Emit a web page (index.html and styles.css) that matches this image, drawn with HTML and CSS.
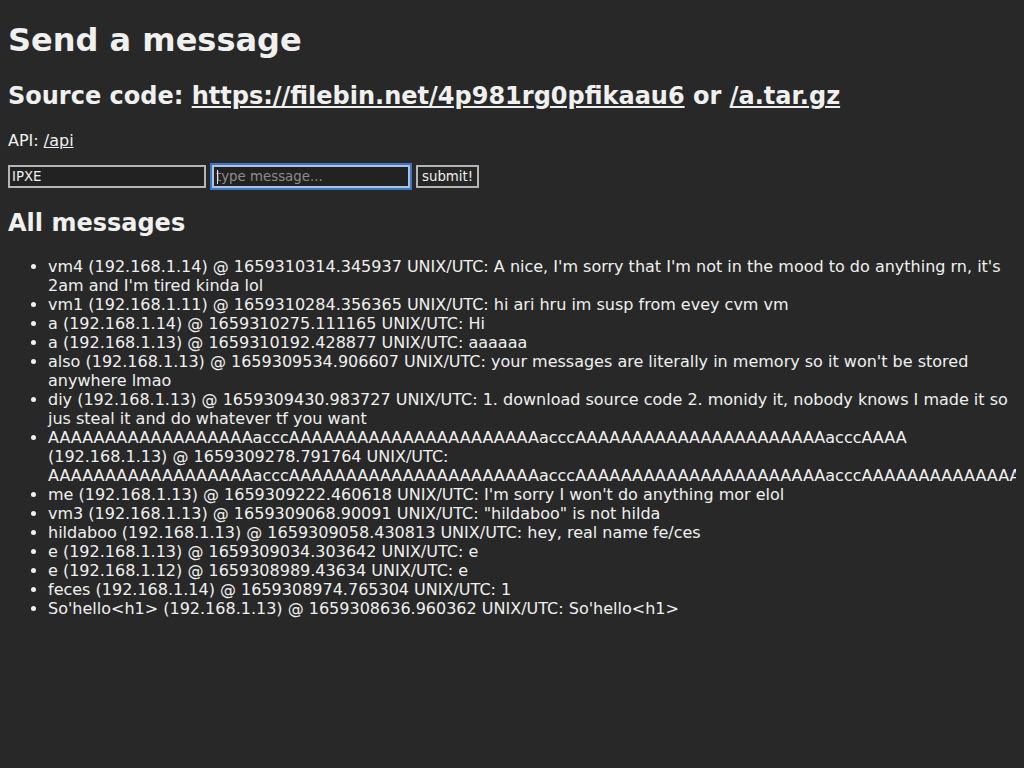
FILE: index.html
```html
<!DOCTYPE html>
<html lang="en">
<head>
<meta charset="utf-8">
<title>Send a message</title>
<link rel="stylesheet" href="styles.css">
</head>
<body>
<h1>Send a message</h1>
<h2 class="source">Source code: <a href="#">https://filebin.net/4p981rg0pfikaau6</a> or <a href="#">/a.tar.gz</a></h2>
<p class="api">API: <a href="#">/api</a></p>
<form class="send-form">
  <input class="field" type="text" value="IPXE">
  <span class="field-wrap">
    <input class="field field-focused" type="text" placeholder="type message...">
    <span class="caret"></span>
  </span>
  <button class="submit" type="button">submit!</button>
</form>
<h2 class="all">All messages</h2>
<ul class="messages">
  <li>vm4 (192.168.1.14) @ 1659310314.345937 UNIX/UTC: A nice, I'm sorry that I'm not in the mood to do anything rn, it's 2am and I'm tired kinda lol</li>
  <li>vm1 (192.168.1.11) @ 1659310284.356365 UNIX/UTC: hi ari hru im susp from evey cvm vm</li>
  <li>a (192.168.1.14) @ 1659310275.111165 UNIX/UTC: Hi</li>
  <li>a (192.168.1.13) @ 1659310192.428877 UNIX/UTC: aaaaaa</li>
  <li>also (192.168.1.13) @ 1659309534.906607 UNIX/UTC: your messages are literally in memory so it won't be stored anywhere lmao</li>
  <li>diy (192.168.1.13) @ 1659309430.983727 UNIX/UTC: 1. download source code 2. monidy it, nobody knows I made it so jus steal it and do whatever tf you want</li>
  <li>AAAAAAAAAAAAAAAAAAacccAAAAAAAAAAAAAAAAAAAAAAacccAAAAAAAAAAAAAAAAAAAAAAacccAAAA (192.168.1.13) @ 1659309278.791764 UNIX/UTC: AAAAAAAAAAAAAAAAAAacccAAAAAAAAAAAAAAAAAAAAAAacccAAAAAAAAAAAAAAAAAAAAAAacccAAAAAAAAAAAAAAAAAAAAAAacccAAAAAAAAAAAAAAAAAAAAAA</li>
  <li>me (192.168.1.13) @ 1659309222.460618 UNIX/UTC: I'm sorry I won't do anything mor elol</li>
  <li>vm3 (192.168.1.13) @ 1659309068.90091 UNIX/UTC: "hildaboo" is not hilda</li>
  <li>hildaboo (192.168.1.13) @ 1659309058.430813 UNIX/UTC: hey, real name fe/ces</li>
  <li>e (192.168.1.13) @ 1659309034.303642 UNIX/UTC: e</li>
  <li>e (192.168.1.12) @ 1659308989.43634 UNIX/UTC: e</li>
  <li>feces (192.168.1.14) @ 1659308974.765304 UNIX/UTC: 1</li>
  <li>So'hello&lt;h1&gt; (192.168.1.13) @ 1659308636.960362 UNIX/UTC: So'hello&lt;h1&gt;</li>
</ul>
</body>
</html>
```
FILE: styles.css
```css
html {
  background: #282828;
  overflow-x: hidden;
}

body {
  margin: 0 8px 8px;
  background: #282828;
  color: #f0f0f0;
  font-family: "DejaVu Sans", sans-serif;
  font-size: 16px;
}

a {
  color: #f0f0f0;
  text-decoration: underline;
}

h1 {
  font-size: 32px;
  margin: 0.67em 0;
}

h2 {
  font-size: 24px;
  margin: 0.83em 0;
}

.source {
  margin-top: 23px;
}

.api {
  margin: 21px 0 15px;
}

.send-form {
  display: flex;
  align-items: center;
  gap: 6px;
  margin: 0;
}

.all {
  margin-top: 21px;
}

.field {
  box-sizing: border-box;
  width: 198px;
  height: 23px;
  margin: 0;
  padding: 1px 2px;
  border: 2px solid #b4b4b4;
  background: #222222;
  color: #f0f0f0;
  font-family: "DejaVu Sans", sans-serif;
  font-size: 13.33px;
  outline: none;
}

.field::placeholder {
  color: #8c8c8c;
}

.field-wrap {
  position: relative;
  display: block;
  height: 23px;
}

.field-focused {
  border-color: #a8c2e2;
  outline: 2px solid #3f76c2;
  outline-offset: 0;
}

.caret {
  position: absolute;
  left: 5px;
  top: 5px;
  width: 1px;
  height: 14px;
  background: #e0e0e0;
}

.submit {
  box-sizing: border-box;
  height: 23px;
  margin: 0;
  padding: 1px 4px;
  border: 2px solid #b4b4b4;
  background: #262626;
  color: #f0f0f0;
  font-family: "DejaVu Sans", sans-serif;
  font-size: 13.33px;
}

.messages {
  margin: 16px 0;
  padding-left: 40px;
}
```
